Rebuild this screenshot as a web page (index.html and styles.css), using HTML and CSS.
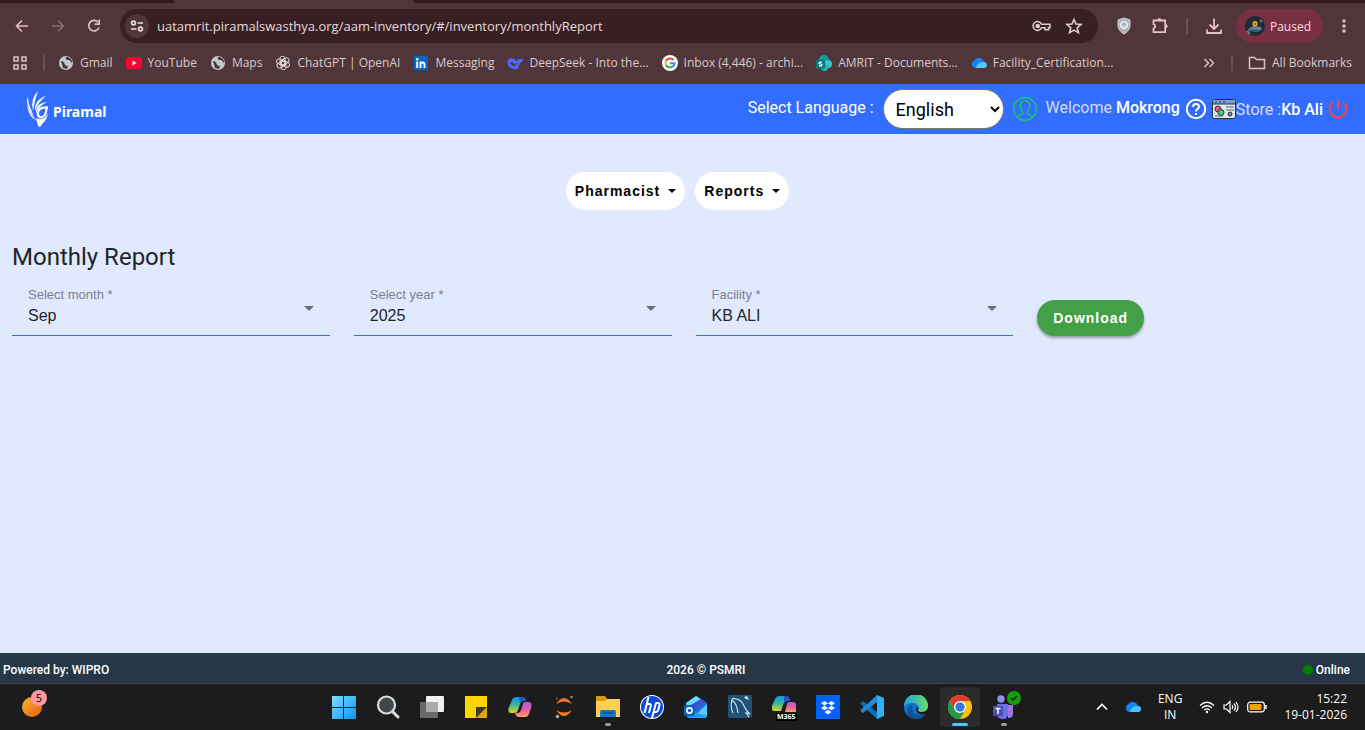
FILE: index.html
```
<!DOCTYPE html>
<html lang="en">

<head>
    <meta charset="UTF-8">
    <meta name="viewport" content="width=device-width, initial-scale=1.0">
    <title>Monthly Report</title>
    <link rel="stylesheet" href="styles.css">
</head>

<body>
    <!-- browser window -->
    <div class="browser">
        <div class="tab-strip"><span class="active-tab"></span></div>
        <div class="toolbar">
            <button type="button" class="tool-btn" aria-label="Back">
                <svg width="16" height="16" viewBox="0 0 16 16" fill="none" stroke="#e3bdc3" stroke-width="1.600"><path d="M14 8H3M8 2.500 2.500 8 8 13.500" /></svg>
            </button>
            <button type="button" class="tool-btn" aria-label="Forward">
                <svg width="16" height="16" viewBox="0 0 16 16" fill="none" stroke="#896d71" stroke-width="1.600"><path d="M2 8h11M8 2.500 13.500 8 8 13.500" /></svg>
            </button>
            <button type="button" class="tool-btn" aria-label="Reload">
                <svg width="16" height="16" viewBox="0 0 16 16" fill="none" stroke="#e3bdc3" stroke-width="1.700"><path d="M13 9.500A5.300 5.300 0 1 1 12 4.200" /><path d="M13.200 1.500v4.600H8.600" /></svg>
            </button>
            <div class="address-bar">
                <button type="button" class="site-info" aria-label="Site information">
                    <svg width="14" height="14" viewBox="0 0 14 14" fill="none" stroke="#e8dfe0" stroke-width="1.600"><circle cx="3.500" cy="4" r="1.900" /><path d="M7.500 4H13M1 10h5.500" /><circle cx="10.500" cy="10" r="1.900" /></svg>
                </button>
                <input type="text" class="url" aria-label="Address" value="uatamrit.piramalswasthya.org/aam-inventory/#/inventory/monthlyReport">
                <button type="button" class="bar-btn" aria-label="Passwords">
                    <svg width="20" height="16" viewBox="0 0 20 16" fill="none" stroke="#dfcacd" stroke-width="1.500"><path d="M9.500 6.300A4.400 4.400 0 1 0 9.500 9.700H13v2h3.500v-2H18V6.300z" /><circle cx="5.700" cy="8" r="1.600" fill="#dfcacd" /></svg>
                </button>
                <button type="button" class="bar-btn" aria-label="Bookmark">
                    <svg width="18" height="18" viewBox="0 0 18 18" fill="none" stroke="#dfcacd" stroke-width="1.600"><path d="M9 2.500l2 4.600 5 .4-3.800 3.300 1.200 4.900L9 13.100l-4.400 2.600 1.200-4.900L2 7.500l5-.4z" /></svg>
                </button>
            </div>
            <button type="button" class="tool-btn" aria-label="Shield">
                <svg width="16" height="18" viewBox="0 0 16 18"><path d="M8 1l6 2v5c0 4-2.500 7-6 9-3.500-2-6-5-6-9V3z" fill="#a9b2c1" stroke="#d6dbe2" /><circle cx="8" cy="8" r="3.600" fill="#c9d0d9" stroke="#fff" /><path d="M6.500 8.500l1.500-2 2 1" fill="none" stroke="#8490a1" /></svg>
            </button>
            <button type="button" class="tool-btn" aria-label="Extensions">
                <svg width="18" height="18" viewBox="0 0 18 18" fill="none" stroke="#e9bfc6" stroke-width="1.800"><path d="M2.500 3.500h11.700v11.700H2.500v-3.700a2.200 2.200 0 0 0 0-4.300z" /><path d="M6.500 3c0-2 3.500-2 3.500 0zM14.700 7.500c2 0 2 3.500 0 3.500z" fill="#e9bfc6" stroke-width="1" /></svg>
            </button>
            <span class="divider"></span>
            <button type="button" class="tool-btn" aria-label="Downloads">
                <svg width="18" height="18" viewBox="0 0 18 18" fill="none" stroke="#e9bfc6" stroke-width="1.800"><path d="M9 1.500v10M4.500 7.500 9 12l4.500-4.500M2 12.500V16h14v-3.500" /></svg>
            </button>
            <button type="button" class="profile">
                <svg width="20" height="20" viewBox="0 0 20 20"><circle cx="10" cy="10" r="10" fill="#1f2833" /><path d="M3 13l5-3 8 1 1 2-4 3-9-1z" fill="#62809e" /><path d="M5 14l9 1" stroke="#273b55" /><rect x="7.500" y="5" width="5" height="5.500" rx="2" fill="#e8ab16" /><path d="M10 6.500v2.500" stroke="#5b4108" /><path d="M2 15l3 3M15 4l2 2" stroke="#4f8f79" stroke-width="2" /></svg>
                <span>Paused</span>
            </button>
            <button type="button" class="tool-btn" aria-label="Menu">
                <svg width="16" height="16" viewBox="0 0 16 16" fill="#e9bfc6"><circle cx="8" cy="3" r="1.700" /><circle cx="8" cy="8" r="1.700" /><circle cx="8" cy="13" r="1.700" /></svg>
            </button>
        </div>

        <nav class="bookmarks">
            <button type="button" class="apps" aria-label="Apps">
                <svg width="16" height="16" viewBox="0 0 16 16" fill="none" stroke="#d5c4c6" stroke-width="1.600"><path d="M2 2h4v4H2zM10 2h4v4h-4zM2 10h4v4H2zM10 10h4v4h-4z" /></svg>
            </button>
            <span class="divider"></span>
            <a href="#">
                <svg width="16" height="16" viewBox="0 0 16 16"><circle cx="8" cy="8" r="7" fill="#c3c9cd" /><path d="M3 6q3 0 3.500 2.500T10 11l-1 3-4-1zM8 2q-1 3 2 3t3 3l1.500-1.500Q13 3 10 2z" fill="#4f3439" /></svg>
                <span>Gmail</span></a>
            <a href="#">
                <svg width="16" height="16" viewBox="0 0 16 16"><rect y="2" width="16" height="12" rx="3" fill="#ff0033" /><path d="M6.500 5.500v5l4-2.500z" fill="#fff" /></svg>
                <span>YouTube</span></a>
            <a href="#">
                <svg width="16" height="16" viewBox="0 0 16 16"><circle cx="8" cy="8" r="7" fill="#c3c9cd" /><path d="M3 6q3 0 3.500 2.500T10 11l-1 3-4-1zM8 2q-1 3 2 3t3 3l1.500-1.500Q13 3 10 2z" fill="#4f3439" /></svg>
                <span>Maps</span></a>
            <a href="#">
                <svg width="16" height="16" viewBox="0 0 16 16" fill="none" stroke="#e4dadb" stroke-width=".9"><rect x="5" y="1.200" width="5" height="9" rx="2.500" /><rect x="5" y="1.200" width="5" height="9" rx="2.500" transform="rotate(60 8 8)" /><rect x="5" y="1.200" width="5" height="9" rx="2.500" transform="rotate(120 8 8)" /><rect x="5" y="1.200" width="5" height="9" rx="2.500" transform="rotate(180 8 8)" /><rect x="5" y="1.200" width="5" height="9" rx="2.500" transform="rotate(240 8 8)" /><rect x="5" y="1.200" width="5" height="9" rx="2.500" transform="rotate(300 8 8)" /></svg>
                <span>ChatGPT | OpenAI</span></a>
            <a href="#">
                <svg width="16" height="16" viewBox="0 0 16 16"><rect x="1" y="1" width="14" height="14" rx="1" fill="#0a66c2" /><path d="M4.200 6.500V13M7.500 13V6.500M7.500 13V9.500q0-2 2-2t2 2V13" fill="none" stroke="#fff" stroke-width="1.900" /><circle cx="4.200" cy="4.200" r="1.200" fill="#fff" /></svg>
                <span>Messaging</span></a>
            <a href="#">
                <svg width="16" height="16" viewBox="0 0 16 16"><path d="M.5 6Q2 2.500 6 3.500q2 .5 3.500 2.500 1.500 1 1-3 1 1.500 2.500 1.500L16 3.500q0 3.500-3 4.500-.5 3-2.500 4.500l1.500 1Q6 15 2.500 12 0 9 .5 6z" fill="#4d6bfe" /><path d="M3 7q4 0 6 4.500Q4.500 11.500 3 7z" fill="#4f3439" /><circle cx="9.500" cy="8.800" r=".9" fill="#4f3439" /></svg>
                <span>DeepSeek - Into the...</span></a>
            <a href="#">
                <svg width="16" height="16" viewBox="0 0 16 16" fill="none" stroke-width="2"><circle cx="8" cy="8" r="8" fill="#fff" stroke="none" /><path d="M11.500 5A4.500 4.500 0 0 0 4 6" stroke="#ea4335" /><path d="M4 6a4.500 4.500 0 0 0 0 4" stroke="#fbbc05" /><path d="M4 10a4.500 4.500 0 0 0 7 1.300" stroke="#34a853" /><path d="M11 11.300A4.500 4.500 0 0 0 12.500 8.300H8" stroke="#4285f4" /></svg>
                <span>Inbox (4,446) - archi...</span></a>
            <a href="#">
                <svg width="16" height="16" viewBox="0 0 16 16"><circle cx="8" cy="5" r="5" fill="#179ba0" /><circle cx="12" cy="9" r="4" fill="#36c5cc" /><circle cx="8.500" cy="12.500" r="3.500" fill="#2cb0b5" /><rect y="4.500" width="9" height="9" rx="1" fill="#087a80" /><path d="M6 7.200H4q-1 0-1 .9t1 .9h1q1 0 1 .9t-1 .9H3" fill="none" stroke="#fff" stroke-width="1.200" /></svg>
                <span>AMRIT - Documents...</span></a>
            <a href="#">
                <svg width="16" height="16" viewBox="0 0 16 16"><path d="M4 13a4 4 0 0 1-1-7.500A5.500 5.500 0 0 1 13 7a3 3 0 0 1 0 6z" fill="#1583f5" /><path d="M5 13q1-6 7.500-6a3 3 0 0 1 .5 6z" fill="#59c9fb" /></svg>
                <span>Facility_Certification...</span></a>
            <button type="button" class="apps more" aria-label="More bookmarks">
                <svg width="14" height="14" viewBox="0 0 14 14" fill="none" stroke="#d5c4c6" stroke-width="1.500"><path d="M2.500 3l4 4-4 4M7.500 3l4 4-4 4" /></svg>
            </button>
            <span class="divider"></span>
            <a href="#" class="all">
                <svg width="18" height="16" viewBox="0 0 18 16" fill="none" stroke="#d5c4c6" stroke-width="1.500"><path d="M1.500 13.500v-11h5l2 2h8v9z" /></svg>
                <span>All Bookmarks</span></a>
        </nav>
    </div>

    <!-- application -->
    <header class="app-header">
        <a href="#" class="brand">
            <svg width="24" height="38" viewBox="0 0 24 38"><g fill="#fff"><path d="M12 1Q4 9 7 21 9 9 12 1zM1 6q-1 12 7 21Q3 16 1 6zM20 6Q8 10 9 21q3-9 11-15zM1 15q1 11 10 16Q4 24 1 15z" /><path d="M21 12Q9 13 10 24q2-8 11-12z" /></g><path d="M22 17.500q-9-1-10 5-.5 5 3.500 5 4.500-1 5-9" fill="none" stroke="#fff" stroke-width="2.200" /><path d="M10 28q8 4 12-5-1 7-5 10l-3 4-2-1z" fill="#fff" /></svg>
            <span>Piramal</span>
        </a>
        <div class="header-tools">
            <label for="language" class="language-label">Select Language :</label>
            <select id="language" class="language">
                <option>English</option>
                <option>Hindi</option>
            </select>
            <svg class="user-icon" width="24" height="24" viewBox="0 0 24 24" fill="none" stroke="#12d35b" stroke-width="1.200"><circle cx="12" cy="12" r="11.300" /><path d="M4 20q2-2 5.500-3v-2Q7.500 13 7.500 10V8q0-4 4.500-4t4.500 4v2q0 3-2 5v2q3.500 1 5.500 3" /></svg>
            <span class="welcome">Welcome <strong>Mokrong</strong></span>
            <button type="button" class="icon-btn" aria-label="Help">
                <svg width="22" height="22" viewBox="0 0 22 22" fill="none" stroke="#fff" stroke-width="2"><circle cx="11" cy="11" r="9.200" /><path d="M8 9q0-3 3-3t3 2.700Q14 10 12.500 11T11 13.500" /><path d="M11 15v2" /></svg>
            </button>
            <div class="store">
                <svg width="24" height="20" viewBox="0 0 24 20"><rect x=".5" y=".5" width="23" height="19" rx="2" fill="#dfe8ed" stroke="#26313a" /><path d="M1 1h22v4H1z" fill="#77a6bc" /><path d="M1 5h22M3 3h2M7 3h2M11 3h2" stroke="#26313a" /><circle cx="6" cy="10" r="3" fill="#ef5b72" stroke="#333" /><circle cx="9" cy="13.500" r="3" fill="#3acb93" stroke="#333" /><path d="M14 8h8M14 11h8M3 17h8" stroke="#536069" /><circle cx="18" cy="15" r="2" fill="#4e94c2" stroke="#333" /></svg>
                <span>Store :<strong>Kb Ali</strong></span>
            </div>
            <button type="button" class="icon-btn" aria-label="Log out">
                <svg width="20" height="20" viewBox="0 0 20 20" fill="none" stroke="#f4453f" stroke-width="2"><path d="M10 1v9M5 3.500a8.300 8.300 0 1 0 10 0" /></svg>
            </button>
        </div>
    </header>

    <main class="content">
        <nav class="menu">
            <button type="button" class="menu-btn">Pharmacist <i class="caret"></i></button>
            <button type="button" class="menu-btn">Reports <i class="caret"></i></button>
        </nav>

        <h1>Monthly Report</h1>
        <form class="report-form">
            <div class="form-field">
                <label for="month">Select month *</label>
                <select id="month">
                    <option>Sep</option>
                </select>
            </div>
            <div class="form-field">
                <label for="year">Select year *</label>
                <select id="year">
                    <option>2025</option>
                </select>
            </div>
            <div class="form-field">
                <label for="facility">Facility *</label>
                <select id="facility">
                    <option>KB ALI</option>
                </select>
            </div>
            <button type="button" class="download">Download</button>
        </form>
    </main>

    <footer class="app-footer">
        <span>Powered by: WIPRO</span>
        <span>2026 © PSMRI</span>
        <span class="status"><i class="dot"></i>Online</span>
    </footer>

    <!-- taskbar -->
    <div class="taskbar">
        <button type="button" class="task weather" aria-label="Widgets">
            <svg width="24" height="24" viewBox="0 0 24 24"><defs><linearGradient id="sun" x2="1" y2="1"><stop stop-color="#f5b73a" /><stop offset="1" stop-color="#ec5b08" /></linearGradient></defs><circle cx="12" cy="12" r="10" fill="url(#sun)" /></svg>
            <span class="badge">5</span>
        </button>
        <div class="tasks">
            <button type="button" class="task" aria-label="Start">
                <svg width="24" height="24" viewBox="0 0 24 24"><defs><linearGradient id="win" gradientUnits="userSpaceOnUse" x2="24" y2="24"><stop stop-color="#7fe0fb" /><stop offset="1" stop-color="#0a94f5" /></linearGradient></defs><path d="M0 1h11v11H0zM12 1h12v11H12zM0 13h11v11H0zM12 13h12v11H12z" fill="url(#win)" /></svg>
            </button>
            <button type="button" class="task" aria-label="Search">
                <svg width="24" height="24" viewBox="0 0 24 24" stroke="#dedede"><circle cx="10.500" cy="10" r="8.500" fill="#41474a" stroke-width="2.200" /><path d="M17 17l5 5" stroke-width="3" stroke-linecap="round" /></svg>
            </button>
            <button type="button" class="task" aria-label="Task view">
                <svg width="24" height="24" viewBox="0 0 24 24"><rect x="6" y="1" width="18" height="16" rx="1" fill="#f1f1f1" /><rect y="7" width="18" height="16" rx="1" fill="#696969" /><path d="M6 7h12v10H6z" fill="#aaa" /></svg>
            </button>
            <button type="button" class="task" aria-label="Sticky Notes">
                <svg width="24" height="24" viewBox="0 0 24 24"><path d="M1 1h22v11L12 23H1z" fill="#fed500" /><path d="M12 12h11L12 23z" fill="#3b3936" /><path d="M23 12v11H12z" fill="#e5a400" /></svg>
            </button>
            <button type="button" class="task" aria-label="Copilot">
                <svg width="24" height="24" viewBox="0 0 24 24"><defs><linearGradient id="cpa" x2="0" y2="1"><stop stop-color="#168fe9" /><stop offset=".5" stop-color="#34b999" /><stop offset="1" stop-color="#e9cd22" /></linearGradient><linearGradient id="cpb" x2="0" y2="1"><stop stop-color="#9c63ec" /><stop offset=".5" stop-color="#ef599b" /><stop offset="1" stop-color="#ffa15c" /></linearGradient></defs><path d="M8 2h6q3 0 4 4h-3q-2 0-3 3l-2 6q-1 3-4 3H3q-4 0-2-6l3-7q1-3 4-3z" fill="url(#cpa)" /><path d="M17 7h3q5 0 3 6l-2 6q-1 3-4 3h-6q-3 0-4-4h2q3 0 4-3l2-6q0-2 2-2z" fill="url(#cpb)" /><path d="M14 2q3 0 4 4h-3q-2 0-3 3l-1-7z" fill="#2457c8" /></svg>
            </button>
            <button type="button" class="task" aria-label="Jupyter">
                <svg width="24" height="24" viewBox="0 0 24 24"><path d="M4 9q8-12 16 0Q12 4 4 9zM4 15q8 12 16 0-8 5-16 0z" fill="#f37726" /><circle cx="19.500" cy="2" r="1.300" fill="#8b8b8b" /><circle cx="5.500" cy="21.500" r="1.800" fill="#aaa" /><circle cx="5" cy="3.500" r="1" fill="#777" /></svg>
            </button>
            <button type="button" class="task running" aria-label="File Explorer">
                <svg width="24" height="24" viewBox="0 0 24 24"><path d="M0 1h9l2 3h10v6H0z" fill="#d99b0a" /><path d="M0 6h9l2-2h13v18H0z" fill="#ffcf55" /><path d="M4 22v-5q0-2 2-2h12q2 0 2 2v5z" fill="#0f76c9" /><path d="M7 18h10" stroke="#084d91" stroke-width="1.500" /></svg>
            </button>
            <button type="button" class="task" aria-label="HP">
                <svg width="24" height="24" viewBox="0 0 24 24"><circle cx="12" cy="12" r="12" fill="#fff" /><circle cx="12" cy="12" r="11" fill="#0b4bdc" /><path d="M8.500 2 4.500 18M7 9h2.500q1.800 0 1.300 2L9 18M16 8l-4 15M15.500 8h2.500q2 0 1.500 2l-1.300 5q-.5 2-2.200 2h-2" fill="none" stroke="#fff" stroke-width="2" /></svg>
            </button>
            <button type="button" class="task" aria-label="Outlook">
                <svg width="24" height="24" viewBox="0 0 24 24"><path d="M2 8 12 1l11 7v12q0 3-3 3H6q-3 0-4-3z" fill="#1672e8" /><path d="M2 8 12 1l5 3L4 13z" fill="#6adcff" /><path d="M5 11l12-7 5 3-11 9z" fill="#4354cf" /><path d="M23 9v11q0 3-3 3H8z" fill="#55c9f9" /><path d="M3 15l20 6-3 2H6q-3 0-3-3z" fill="#279bf2" /><rect y="10" width="11" height="11" rx="2" fill="#0b62c9" /><circle cx="5.500" cy="15.500" r="2.600" fill="none" stroke="#fff" stroke-width="1.600" /></svg>
            </button>
            <button type="button" class="task" aria-label="MySQL Workbench">
                <svg width="24" height="24" viewBox="0 0 24 24"><rect width="24" height="23" rx="2" fill="#1f5279" /><path d="M5 18Q2 12 4 5q0-3 4-1 6 1 8 7 2 5 6 8l-4-1 3 4M4 5q4 3 5 8l1 5" fill="none" stroke="#dbe8ef" stroke-width="1.100" /><path d="M16 2l2 2 3 1-2-4z" fill="#dce7ec" /></svg>
            </button>
            <button type="button" class="task" aria-label="Microsoft 365">
                <svg width="24" height="24" viewBox="0 0 24 24"><path d="M8 1h6q3 0 4 5h-3q-3 0-4 4l-2 6H2q-3 0-2-5l3-7q1-3 5-3z" fill="url(#cpa)" /><path d="M12 1h3q2 1 3 5h-3q-2 0-3 3z" fill="#2453c5" /><path d="M17 7h4q4 0 3 6v4H13l2-8q0-2 2-2z" fill="url(#cpb)" /></svg>
                <span class="tag">M365</span>
            </button>
            <button type="button" class="task" aria-label="Dropbox">
                <svg width="24" height="24" viewBox="0 0 24 24"><path fill="#0061ff" d="M0 0h24v24H0z" /><path d="M8.500 6l3.500 2.300-3.500 2.300L5 8.300zM15.500 6 19 8.300l-3.500 2.300L12 8.300zM8.500 10.600l3.500 2.300-3.500 2.300L5 12.900zM15.500 10.600l3.500 2.300-3.500 2.300-3.500-2.300zM12 14.800l3.500 2.300L12 19.400l-3.500-2.300z" fill="#fff" /></svg>
            </button>
            <button type="button" class="task" aria-label="Visual Studio Code">
                <svg width="24" height="24" viewBox="0 0 24 24"><path d="M3 6 0 8.500 17 24V17z" fill="#0870b8" /><path d="M17 0v7L3 18l-3-2.500z" fill="#1f8ad6" /><path d="M17 0l7 3v18l-7 3z" fill="#33aff5" /></svg>
            </button>
            <button type="button" class="task" aria-label="Edge">
                <svg width="24" height="24" viewBox="0 0 24 24"><defs><linearGradient id="edge"><stop stop-color="#25a5e9" /><stop offset="1" stop-color="#64db63" /></linearGradient></defs><circle cx="12" cy="12" r="12" fill="#1274c9" /><path d="M0 11A12 12 0 0 1 24 11q0 6-6 6-4 0-4-2 2-2 0-5-6-5-14 1z" fill="url(#edge)" /><path d="M8 12q0 8 8 8 4 0 6-2-3 6-10 6Q3 23 3 16q0-5 7-7-2 1-2 3z" fill="#0d529d" /><path d="M14 15q0 2 4 2 4 0 6-4v4l-2 2q-8 2-10-4 0-2 1-3 2 1 1 3z" fill="#1c1c1c" /></svg>
            </button>
            <button type="button" class="task running current" aria-label="Chrome">
                <svg width="24" height="24" viewBox="0 0 24 24"><circle cx="12" cy="12" r="12" fill="#fbc116" /><path d="M1.600 6A12 12 0 0 1 22.400 6H12L6.800 15z" fill="#e33b2e" /><path d="M1.600 6 6.800 15 12 18l5.200-3L12 24A12 12 0 0 1 1.600 6z" fill="#229a48" /><circle cx="12" cy="12" r="6" fill="#fff" /><circle cx="12" cy="12" r="4.700" fill="#3478e5" /></svg>
            </button>
            <button type="button" class="task running" aria-label="Teams">
                <svg width="24" height="24" viewBox="0 0 24 24"><circle cx="9" cy="4" r="3.700" fill="#8c91ee" /><path d="M5 9h11v10q0 5-5 5-6 0-6-5z" fill="#6d70e4" /><path d="M16 10h5v9q0 4-5 4z" fill="#a174e6" /><rect x="1" y="11" width="10" height="10" rx="1" fill="#4c4db5" /><path d="M3.500 13.500h5M6 13.500V19" stroke="#fff" stroke-width="1.500" /></svg>
                <svg class="check" width="14" height="14" viewBox="0 0 14 14"><circle cx="7" cy="7" r="7" fill="#13a10e" /><path d="M4 7l2 2 4-4" fill="none" stroke="#111" stroke-width="1.300" /></svg>
            </button>
        </div>
        <div class="tray">
            <svg width="12" height="16" viewBox="0 0 12 16" fill="none" stroke="#fff" stroke-width="1.700"><path d="M1 10.500 6 5.500l5 5" /></svg>
            <svg width="16" height="16" viewBox="0 0 16 16"><path d="M4 13a4 4 0 0 1-1-7.500A5.500 5.500 0 0 1 13 7a3 3 0 0 1 0 6z" fill="#1583f5" /><path d="M5 13q1-6 7.500-6a3 3 0 0 1 .5 6z" fill="#42c8fa" /></svg>
            <div class="lang">ENG<br>IN</div>
            <div class="system">
                <svg width="16" height="16" viewBox="0 0 16 16" fill="none" stroke="#fff" stroke-width="1.200"><path d="M1 6.500q7-6.500 14 0M3 9q5-4.500 10 0M5.300 11q2.700-2.300 5.400 0" /><circle cx="8" cy="13" r="1.200" fill="#fff" stroke="none" /></svg>
                <svg width="16" height="16" viewBox="0 0 16 16" fill="none" stroke="#fff" stroke-width="1.200"><path d="M1 6h2.500L7 2.500v11L3.500 10H1zM9 6q1.500 2 0 4M11 4.500q3 3.500 0 7M13 3q4 5 0 10" /></svg>
                <svg width="20" height="16" viewBox="0 0 20 16"><rect x=".7" y="3.200" width="16.600" height="9.600" rx="2.500" fill="none" stroke="#fff" stroke-width="1.200" /><rect x="2.500" y="5" width="12" height="6" rx="1" fill="#f0a30a" /><path d="M19 6v4" stroke="#fff" stroke-width="1.500" /></svg>
            </div>
            <div class="clock">15:22<br>19-01-2026</div>
        </div>
    </div>
</body>

</html>
```
FILE: styles.css
```
* {
    box-sizing: border-box;
}

body {
    margin: 0;
    min-height: 100vh;
    display: flex;
    flex-direction: column;
    background-color: #e1e9ff;
    font-family: Roboto, "Liberation Sans", sans-serif;
    color: #212529;
}

button {
    border: none;
    background: none;
    padding: 0;
    font: inherit;
    color: inherit;
    cursor: pointer;
}

a {
    color: inherit;
    text-decoration: none;
}

svg {
    display: block;
    flex-shrink: 0;
}

/* browser window */
.browser {
    background-color: #50353a;
    font-family: "Open Sans", "Noto Sans", sans-serif;
    font-size: 12px;
    color: #dbcacc;
}

.tab-strip {
    height: 3px;
    padding-left: 174px;
    background-color: #32191e;
}

.active-tab {
    display: block;
    width: 240px;
    height: 3px;
    background-color: #50353a;
}

.toolbar {
    display: flex;
    align-items: center;
    height: 46px;
    padding: 0 11px 0 12px;
}

.tool-btn {
    display: flex;
    align-items: center;
    justify-content: center;
    width: 20px;
    height: 34px;
    margin-right: 16px;
}

.address-bar {
    flex: 1;
    display: flex;
    align-items: center;
    height: 34px;
    padding: 0 14px 0 5px;
    margin-right: 16px;
    border-radius: 17px;
    background-color: #381f24;
}

.site-info {
    display: flex;
    align-items: center;
    justify-content: center;
    width: 24px;
    height: 24px;
    border-radius: 12px;
    background-color: #50353a;
}

.url {
    flex: 1;
    padding: 0 8px;
    border: none;
    outline: none;
    background: none;
    font-family: inherit;
    font-size: 13px;
    color: #e6dadb;
}

.bar-btn {
    display: flex;
    justify-content: center;
    width: 20px;
    margin-left: 12px;
}

.divider {
    width: 2px;
    height: 16px;
    background-color: #6d4f55;
}

.toolbar .divider {
    margin-right: 16px;
}

.profile {
    display: flex;
    align-items: center;
    gap: 5px;
    height: 34px;
    padding: 0 12px 0 9px;
    margin: 0 11px 0 -4px;
    border-radius: 17px;
    background-color: #762f43;
    color: #ffdbe1;
}

.toolbar .tool-btn:last-child {
    margin-right: 0;
}

.bookmarks {
    display: flex;
    align-items: center;
    height: 35px;
    padding: 0 13px 8px 12px;
}

.bookmarks a {
    display: flex;
    align-items: center;
    gap: 6px;
    margin-left: 13px;
    white-space: nowrap;
}

.bookmarks .apps {
    margin-right: 15px;
}

.bookmarks .more {
    margin-left: auto;
}

.bookmarks .all {
    margin-left: 15px;
}

/* application header */
.app-header {
    display: flex;
    align-items: center;
    justify-content: space-between;
    height: 50px;
    padding: 0 17px 0 26px;
    background-color: #336dff;
    color: #fff;
    font-size: 16px;
}

.brand {
    display: flex;
    align-items: center;
    gap: 3px;
    font-family: "Noto Sans", sans-serif;
    font-size: 14px;
    font-weight: bold;
}

.brand span {
    padding-top: 5px;
}

.header-tools {
    display: flex;
    align-items: center;
    gap: 9px;
}

.header-tools strong {
    font-weight: 500;
    color: #fff;
}

.language-label {
    padding-bottom: 4px;
}

.language {
    width: 121px;
    height: 40px;
    padding: 0 0 0 8px;
    border: 1px solid #767676;
    border-radius: 20px;
    background-color: #fff;
    font-family: inherit;
    font-size: 18px;
    color: #000;
}

.welcome,
.store {
    color: #d5dcf2;
}

.welcome {
    padding-bottom: 4px;
}

.icon-btn,
.store {
    margin-left: -4px;
}

.store {
    display: flex;
    align-items: center;
}

/* page content */
.content {
    flex: 1;
    padding: 38px 10px 0 12px;
}

.menu {
    display: flex;
    justify-content: center;
    gap: 10px;
    margin-right: 12px;
}

.menu-btn {
    display: flex;
    align-items: center;
    gap: 8px;
    height: 38px;
    padding: 0 9px;
    border-radius: 19px;
    background-color: #fff;
    font-family: "Liberation Sans", Arial, sans-serif;
    font-size: 14px;
    font-weight: bold;
    letter-spacing: 1px;
    color: #000;
}

.caret {
    border-top: 4px solid #000;
    border-left: 4px solid transparent;
    border-right: 4px solid transparent;
}

h1 {
    margin: 32px 0 12px;
    font-size: 24px;
    font-weight: 400;
    line-height: 30px;
}

.report-form {
    display: grid;
    grid-template-columns: repeat(4, 1fr);
    gap: 24px;
    font-family: "Liberation Sans", Arial, sans-serif;
}

.form-field {
    position: relative;
    height: 52px;
    border-bottom: 1px solid #336dff;
}

.form-field label {
    position: absolute;
    top: 3px;
    left: 16px;
    font-size: 13px;
    line-height: 16px;
    color: #7b808e;
}

.form-field select {
    appearance: none;
    width: 100%;
    height: 51px;
    padding: 12px 16px 0;
    border: none;
    background: none;
    font-family: inherit;
    font-size: 16px;
    color: #212529;
}

.form-field::after {
    content: "";
    position: absolute;
    top: 22px;
    right: 16px;
    border-top: 5px solid #6b6f7b;
    border-left: 5px solid transparent;
    border-right: 5px solid transparent;
    pointer-events: none;
}

.download {
    justify-self: start;
    align-self: end;
    height: 36px;
    padding: 0 16px;
    border-radius: 18px;
    background-color: #43a047;
    box-shadow: 0 2px 3px rgba(0, 0, 0, 0.35);
    font-size: 14px;
    font-weight: bold;
    letter-spacing: 1px;
    color: #fff;
}

/* footer */
.app-footer {
    display: flex;
    align-items: center;
    justify-content: space-between;
    height: 31px;
    padding: 3px 15px 0 3px;
    background-color: #263747;
    border-bottom: 1px solid #444;
    color: #fff;
    font-size: 12px;
    font-weight: 500;
}

.status {
    display: flex;
    align-items: center;
    gap: 3px;
}

.dot {
    width: 10px;
    height: 10px;
    border-radius: 50%;
    background-color: #008000;
}

/* taskbar */
.taskbar {
    display: grid;
    grid-template-columns: 1fr auto 1fr;
    align-items: center;
    height: 46px;
    padding: 0 18px 0 0;
    background-color: #1c1c1c;
    color: #fff;
    font-family: "Open Sans", "Noto Sans", sans-serif;
    font-size: 12px;
    line-height: 16px;
}

.tasks {
    display: flex;
    gap: 4px;
}

.task {
    position: relative;
    display: flex;
    align-items: center;
    justify-content: center;
    width: 40px;
    height: 40px;
}

.weather {
    margin-left: 12px;
}

.badge {
    position: absolute;
    top: 3px;
    right: 5px;
    width: 16px;
    height: 16px;
    border-radius: 50%;
    background-color: #ff99a4;
    font-size: 11px;
    color: #000;
}

.tag {
    position: absolute;
    bottom: 6px;
    right: 7px;
    padding: 0 1px;
    background-color: #000;
    font-size: 7px;
    font-weight: bold;
    line-height: 8px;
}

.check {
    position: absolute;
    top: 4px;
    right: 3px;
}

.running::after {
    content: "";
    position: absolute;
    bottom: 1px;
    left: 17px;
    width: 6px;
    height: 3px;
    border-radius: 2px;
    background-color: #9b9b9b;
}

.current {
    border-radius: 4px;
    background-color: #2b2b2b;
}

.current::after {
    left: 12px;
    width: 16px;
    background-color: #4cc2ff;
}

.tray {
    display: flex;
    align-items: center;
    justify-content: flex-end;
    gap: 17px;
}

.lang {
    text-align: center;
}

.system {
    display: flex;
    gap: 8px;
}

.clock {
    text-align: right;
}
```
